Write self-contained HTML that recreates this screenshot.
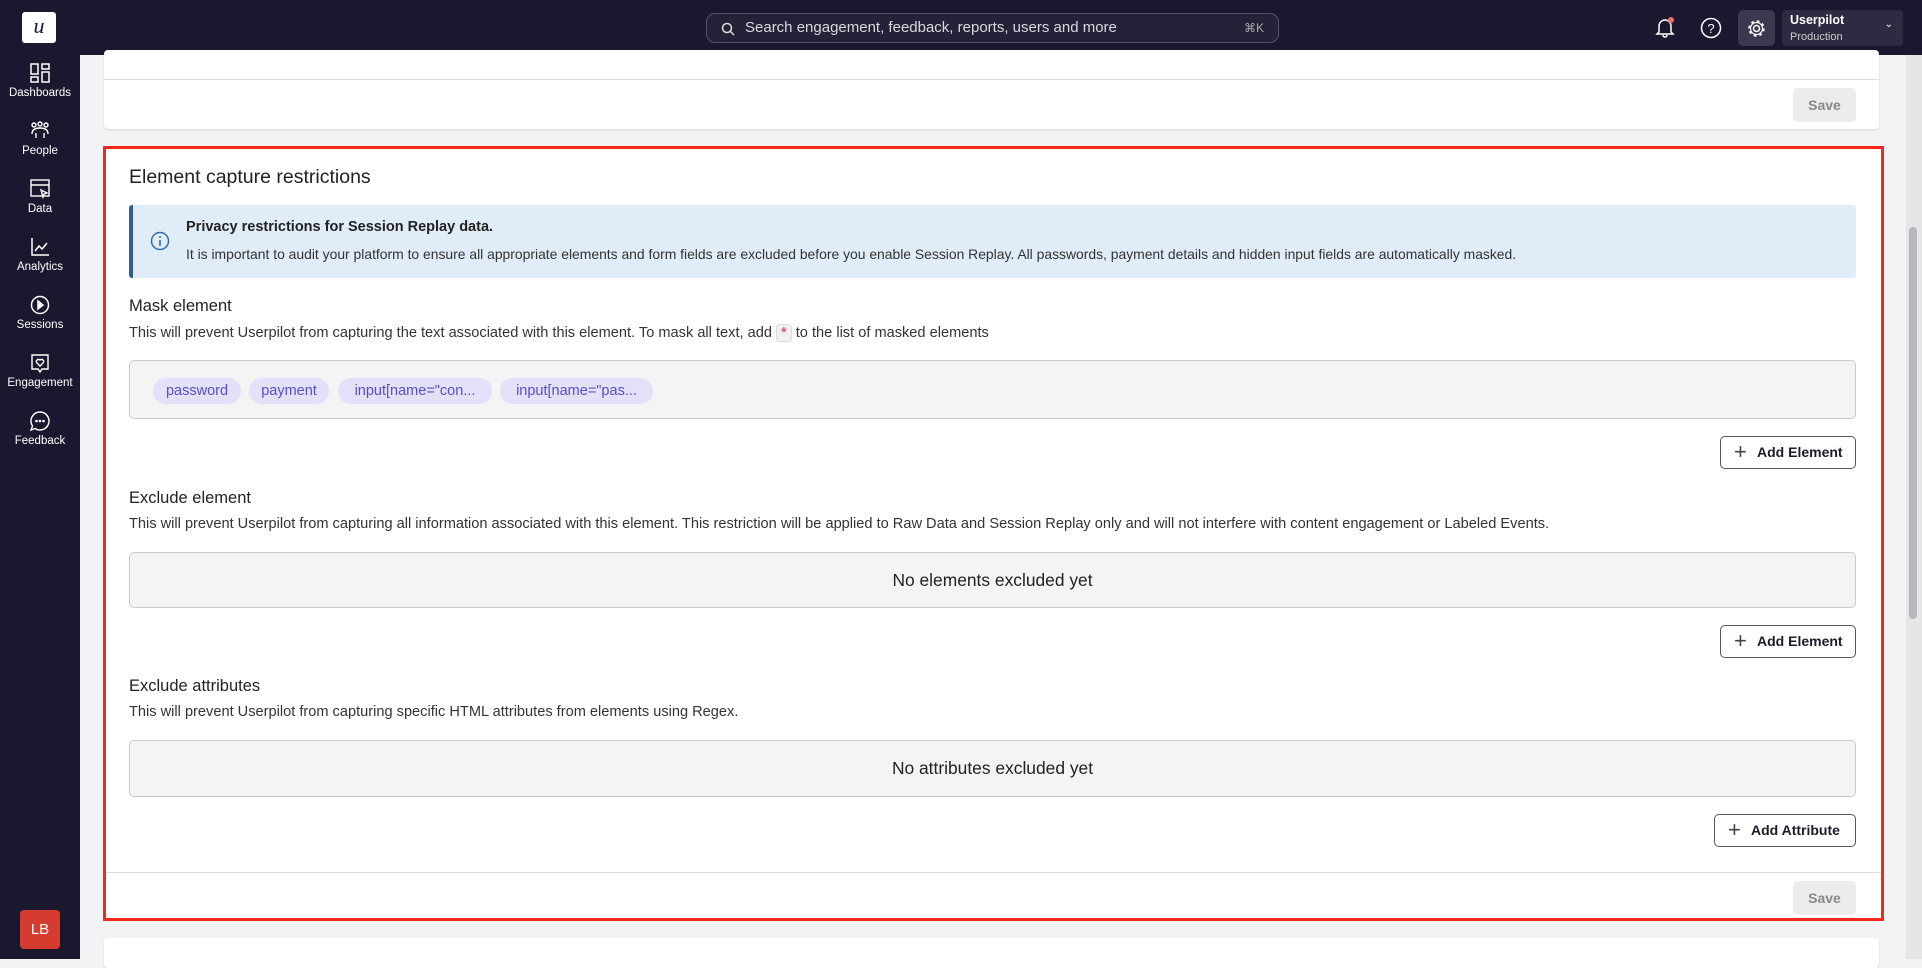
<!DOCTYPE html>
<html><head><meta charset="utf-8"><style>
*{box-sizing:border-box;margin:0;padding:0}
body{width:1922px;height:959px;overflow:hidden;background:#f2f3f4;font-family:"Liberation Sans",sans-serif;color:#1c1c28;position:relative}
.top{position:absolute;left:0;top:0;width:1922px;height:55px;background:#19182e}
.side{position:absolute;left:0;top:55px;width:80px;height:904px;background:#19182e}
.logo{position:absolute;left:22px;top:12px;width:34px;height:31px;background:#fff;border-radius:3px;font-family:"Liberation Serif",serif;font-style:italic;font-size:22px;text-align:center;line-height:28px;color:#19182e}
.search{position:absolute;left:706px;top:13px;width:573px;height:30px;border:1px solid #55546a;border-radius:9px;background:#232238;color:#d8d8e0;font-size:15px;line-height:28px;padding-left:38px}
.search .k{position:absolute;right:14px;top:0;font-size:12px;color:#aaa}
.nav{position:absolute;left:0;width:80px;text-align:center;color:#fff;font-size:11.5px}
.nav svg{display:block;margin:0 auto 3px}
.card{position:absolute;background:#fff;border-radius:4px;box-shadow:0 1px 2px rgba(0,0,0,.12)}
.save{position:absolute;width:63px;height:34px;background:#ececee;border-radius:5px;color:#888;font-weight:bold;font-size:14px;text-align:center;line-height:34px}
.red{position:absolute;left:103px;top:146px;width:1781px;height:775px;border:3px solid #f5281c;background:#fff}
.a{position:absolute;left:129px}
h2{font-size:19.5px;font-weight:normal;color:#222}
h3{font-size:16.5px;font-weight:normal;color:#222}
.d{font-size:14.6px;color:#333}
.box{position:absolute;left:129px;width:1727px;background:#f4f4f4;border:1px solid #c9c9c9;border-radius:5px}
.empty{text-align:center;font-size:17.4px;color:#222}
.chip{position:absolute;top:378px;height:26px;background:#e3e0fa;color:#5a4fc2;border-radius:13px;font-size:14.5px;line-height:26px;text-align:center}
.btn{position:absolute;height:33px;border:1px solid #555;border-radius:5px;background:#fff;font-weight:bold;font-size:14px;line-height:31px;padding-left:36px}
.btn:before{content:"+";position:absolute;left:13px;top:-1px;font-weight:normal;font-size:22px;color:#444}
</style></head><body>
<div class="top"></div>
<div class="side"></div>
<div class="logo">u</div>
<div class="search"><svg style="position:absolute;left:14px;top:8px" width="14" height="14" viewBox="0 0 14 14"><circle cx="6" cy="6" r="4.5" fill="none" stroke="#ddd" stroke-width="1.5"/><path d="M9.5 9.5L13 13" stroke="#ddd" stroke-width="1.5"/></svg>Search engagement, feedback, reports, users and more<span class="k">⌘K</span></div>
<svg style="position:absolute;left:1655px;top:17px" width="20" height="22" viewBox="0 0 20 22"><path d="M4 15V9a6 6 0 0 1 12 0v6l2 2H2z M8 18a2 2 0 0 0 4 0" fill="none" stroke="#fff" stroke-width="1.5"/><circle cx="16" cy="3" r="3" fill="#f26b6b"/></svg>
<svg style="position:absolute;left:1700px;top:17px" width="22" height="22"><circle cx="11" cy="11" r="9.5" fill="none" stroke="#fff" stroke-width="1.5"/><text x="11" y="16" fill="#fff" font-size="13" text-anchor="middle" font-family="Liberation Sans">?</text></svg>
<div style="position:absolute;left:1738px;top:10px;width:37px;height:36px;background:#3a3950;border-radius:5px"><svg style="position:absolute;left:8px;top:8px" width="21" height="21" viewBox="0 0 21 21"><circle cx="10.5" cy="10.5" r="3" fill="none" stroke="#fff" stroke-width="1.5"/><circle cx="10.5" cy="10.5" r="7" fill="none" stroke="#fff" stroke-width="2.5" stroke-dasharray="2.6 2.9"/><circle cx="10.5" cy="10.5" r="6" fill="none" stroke="#fff" stroke-width="1.2"/></svg></div>
<div style="position:absolute;left:1782px;top:10px;width:121px;height:36px;background:#2c2b42;border-radius:4px;color:#fff"><div style="position:absolute;left:8px;top:3px;font-size:12.5px;font-weight:bold">Userpilot</div><div style="position:absolute;left:8px;top:21px;font-size:11px;color:#ccc">Production</div><div style="position:absolute;right:10px;top:9px;font-size:10px">⌄</div></div>

<div class="nav" style="top:62px"><svg width="22" height="22" viewBox="0 0 22 22" fill="none" stroke="#fff" stroke-width="1.5"><rect x="2" y="2" width="7" height="10"/><rect x="2" y="15" width="7" height="5"/><rect x="13" y="2" width="7" height="5"/><rect x="13" y="10" width="7" height="10"/></svg>Dashboards</div>
<div class="nav" style="top:120px"><svg width="22" height="22" viewBox="0 0 22 22" fill="none" stroke="#fff" stroke-width="1.4"><circle cx="5" cy="5" r="2"/><circle cx="11" cy="4" r="2"/><circle cx="17" cy="5" r="2"/><path d="M3 14c0-4 3-6 8-6s8 2 8 6M7 18v-5M15 18v-5"/></svg>People</div>
<div class="nav" style="top:178px"><svg width="22" height="22" viewBox="0 0 22 22" fill="none" stroke="#fff" stroke-width="1.4"><rect x="2" y="2" width="18" height="16"/><path d="M2 7h18M12 12l6 3-3 1-1 3z"/></svg>Data</div>
<div class="nav" style="top:236px"><svg width="22" height="22" viewBox="0 0 22 22" fill="none" stroke="#fff" stroke-width="1.5"><path d="M3 2v17h17M6 15l4-5 3 3 5-6"/></svg>Analytics</div>
<div class="nav" style="top:294px"><svg width="22" height="22" viewBox="0 0 22 22" fill="none" stroke="#fff" stroke-width="1.5"><circle cx="11" cy="11" r="8.5"/><path d="M9 7l5 4-5 4z" fill="#fff"/></svg>Sessions</div>
<div class="nav" style="top:352px"><svg width="22" height="22" viewBox="0 0 22 22" fill="none" stroke="#fff" stroke-width="1.4"><path d="M3 3h16v14h-6l-2 3-2-3H3z"/><path d="M11 14l-3-3a2 2 0 0 1 3-3 2 2 0 0 1 3 3z"/></svg>Engagement</div>
<div class="nav" style="top:410px"><svg width="22" height="22" viewBox="0 0 22 22" fill="none" stroke="#fff" stroke-width="1.4"><path d="M11 2a9 9 0 1 1-5 16.5L2 20l1.5-4A9 9 0 0 1 11 2z"/><circle cx="7.5" cy="11" r=".6" fill="#fff"/><circle cx="11" cy="11" r=".6" fill="#fff"/><circle cx="14.5" cy="11" r=".6" fill="#fff"/></svg>Feedback</div>
<div style="position:absolute;left:20px;top:910px;width:40px;height:39px;background:#d63b2f;border-radius:4px;color:#fff;font-size:15px;text-align:center;line-height:39px">LB</div>

<div class="card" style="left:104px;top:50px;width:1775px;height:79px"><div style="position:absolute;left:0;top:29px;width:100%;height:1px;background:#ddd"></div></div>
<div class="save" style="left:1793px;top:88px">Save</div>

<div class="red"></div>
<h2 class="a" style="top:166px">Element capture restrictions</h2>
<div style="position:absolute;left:129px;top:205px;width:1727px;height:73px;background:#e0ecf8;border-left:4px solid #2f5f92;border-radius:3px">
<svg style="position:absolute;left:17px;top:26px" width="20" height="20"><circle cx="10" cy="10" r="8.5" fill="none" stroke="#2f6ea6" stroke-width="1.5"/><path d="M10 9v6" stroke="#2f6ea6" stroke-width="1.6"/><circle cx="10" cy="6" r="1" fill="#2f6ea6"/></svg>
<div style="position:absolute;left:53px;top:14px;font-size:14.5px;font-weight:bold;color:#222">Privacy restrictions for Session Replay data.</div>
<div style="position:absolute;left:53px;top:41px;font-size:13.9px;color:#333">It is important to audit your platform to ensure all appropriate elements and form fields are excluded before you enable Session Replay. All passwords, payment details and hidden input fields are automatically masked.</div></div>

<h3 class="a" style="top:297px">Mask element</h3>
<div class="a d" style="top:324px">This will prevent Userpilot from capturing the text associated with this element. To mask all text, add <span style="display:inline-block;background:#f1f1f1;border:1px solid #ddd;border-radius:3px;color:#e0245e;padding:0 4px">*</span> to the list of masked elements</div>
<div class="box" style="top:360px;height:59px"></div>
<div class="chip" style="left:153px;width:88px">password</div>
<div class="chip" style="left:249px;width:80px">payment</div>
<div class="chip" style="left:338px;width:154px">input[name="con...</div>
<div class="chip" style="left:500px;width:153px">input[name="pas...</div>
<div class="btn" style="left:1720px;top:436px;width:136px">Add Element</div>

<h3 class="a" style="top:489px">Exclude element</h3>
<div class="a d" style="top:516px">This will prevent Userpilot from capturing all information associated with this element. This restriction will be applied to Raw Data and Session Replay only and will not interfere with content engagement or Labeled Events.</div>
<div class="box empty" style="top:552px;height:56px;line-height:54px">No elements excluded yet</div>
<div class="btn" style="left:1720px;top:625px;width:136px">Add Element</div>

<h3 class="a" style="top:677px">Exclude attributes</h3>
<div class="a d" style="top:704px">This will prevent Userpilot from capturing specific HTML attributes from elements using Regex.</div>
<div class="box empty" style="top:740px;height:57px;line-height:55px">No attributes excluded yet</div>
<div class="btn" style="left:1714px;top:814px;width:142px">Add Attribute</div>
<div style="position:absolute;left:106px;top:872px;width:1775px;height:1px;background:#ddd"></div>
<div class="save" style="left:1793px;top:881px">Save</div>

<div class="card" style="left:104px;top:938px;width:1775px;height:30px"></div>
<div style="position:absolute;left:1906px;top:55px;width:16px;height:904px;background:#e4e6e8"></div>
<div style="position:absolute;left:1909px;top:227px;width:8px;height:392px;background:#b5b9bd;border-radius:4px"></div>
</body></html>
